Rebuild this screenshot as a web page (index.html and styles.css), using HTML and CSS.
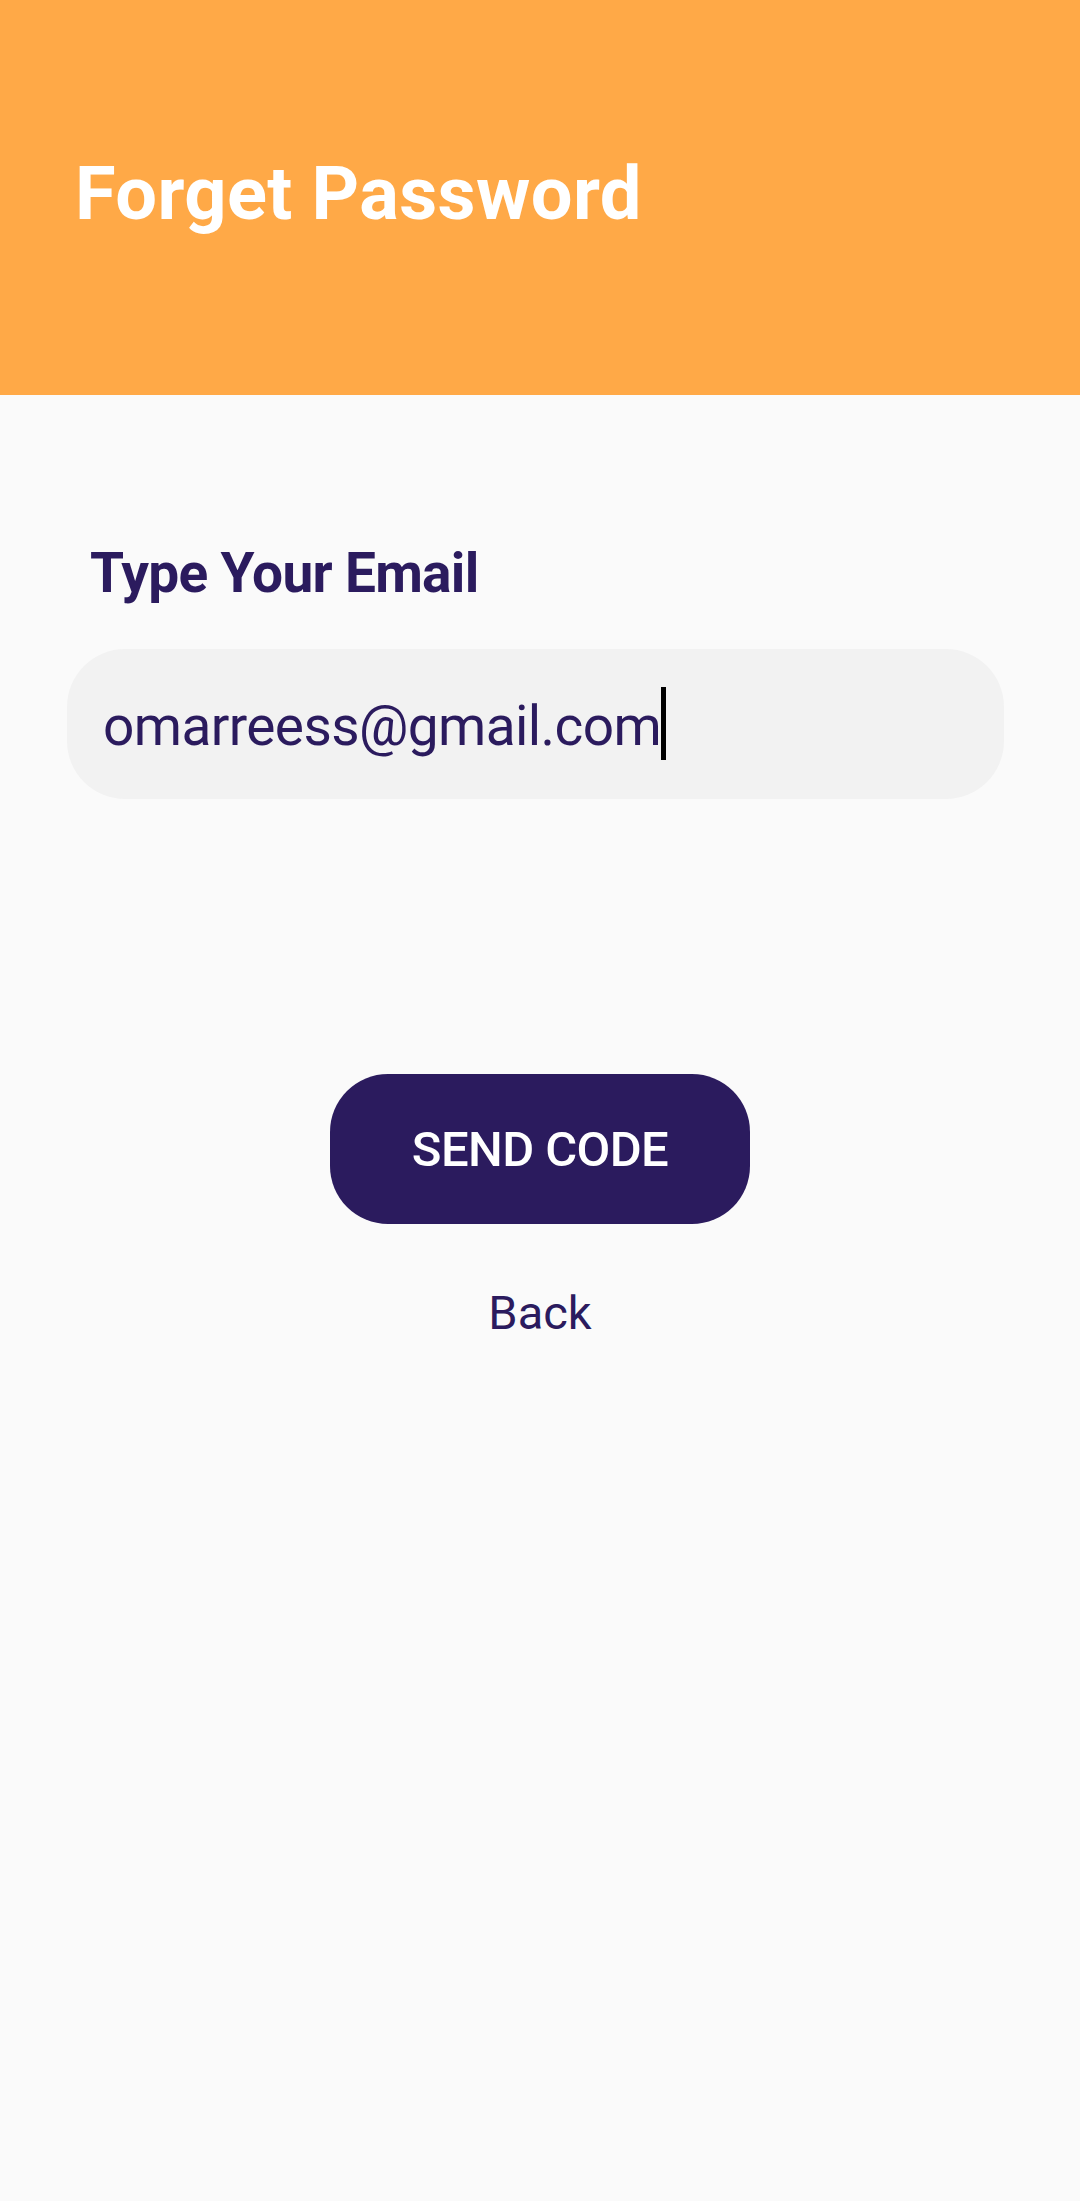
FILE: index.html
```html
<!DOCTYPE html>
<html>
<head>
<meta charset="utf-8">
<link rel="stylesheet" href="styles.css">
</head>
<body>
<header class="header">
  <h1 class="title">Forget Password</h1>
</header>
<main class="content">
  <label class="label">Type Your Email</label>
  <div class="field"><span class="field-text">omarreess@gmail.com</span><span class="caret"></span></div>
  <div class="actions">
    <button class="send">SEND CODE</button>
    <a class="back">Back</a>
  </div>
</main>
</body>
</html>
```
FILE: styles.css
```css
html, body {
  margin: 0;
  padding: 0;
}
body {
  width: 1080px;
  height: 2201px;
  background: #fafafa;
  font-family: Roboto, "Noto Sans", sans-serif;
  overflow: hidden;
}
.header {
  background: #ffa947;
  height: 395px;
  box-sizing: border-box;
  padding: 151px 0 0 75px;
}
.title {
  margin: 0;
  color: #ffffff;
  font-size: 74px;
  font-weight: 700;
  line-height: 1.172;
  letter-spacing: 0.4px;
}
.content {
  display: flex;
  flex-direction: column;
}
.label {
  margin: 146px 0 0 90px;
  color: #2b1b5e;
  font-size: 55px;
  font-weight: 700;
  line-height: 1.172;
  letter-spacing: -0.7px;
}
.field {
  margin: 44px 0 0 67px;
  width: 937px;
  height: 150px;
  box-sizing: border-box;
  border-radius: 58px;
  background: #f2f2f2;
  padding: 45px 0 0 36px;
  display: flex;
  align-items: flex-start;
}
.field-text {
  color: #2b1b5e;
  font-size: 55px;
  font-weight: 400;
  line-height: 1.172;
  letter-spacing: -0.6px;
}
.caret {
  display: block;
  width: 5px;
  height: 73px;
  margin-top: -7px;
  background: #000;
}
.actions {
  display: flex;
  flex-direction: column;
  align-items: center;
  margin-top: 275px;
}
.send {
  width: 420px;
  height: 150px;
  border: none;
  border-radius: 58px;
  background: #2b1b5e;
  color: #ffffff;
  font-family: Roboto, "Noto Sans", sans-serif;
  font-size: 49px;
  font-weight: 500;
  letter-spacing: -0.6px;
  padding: 0;
}
.back {
  margin-top: 61px;
  color: #2b1b5e;
  font-size: 47px;
  font-weight: 400;
  line-height: 1.172;
}
```
